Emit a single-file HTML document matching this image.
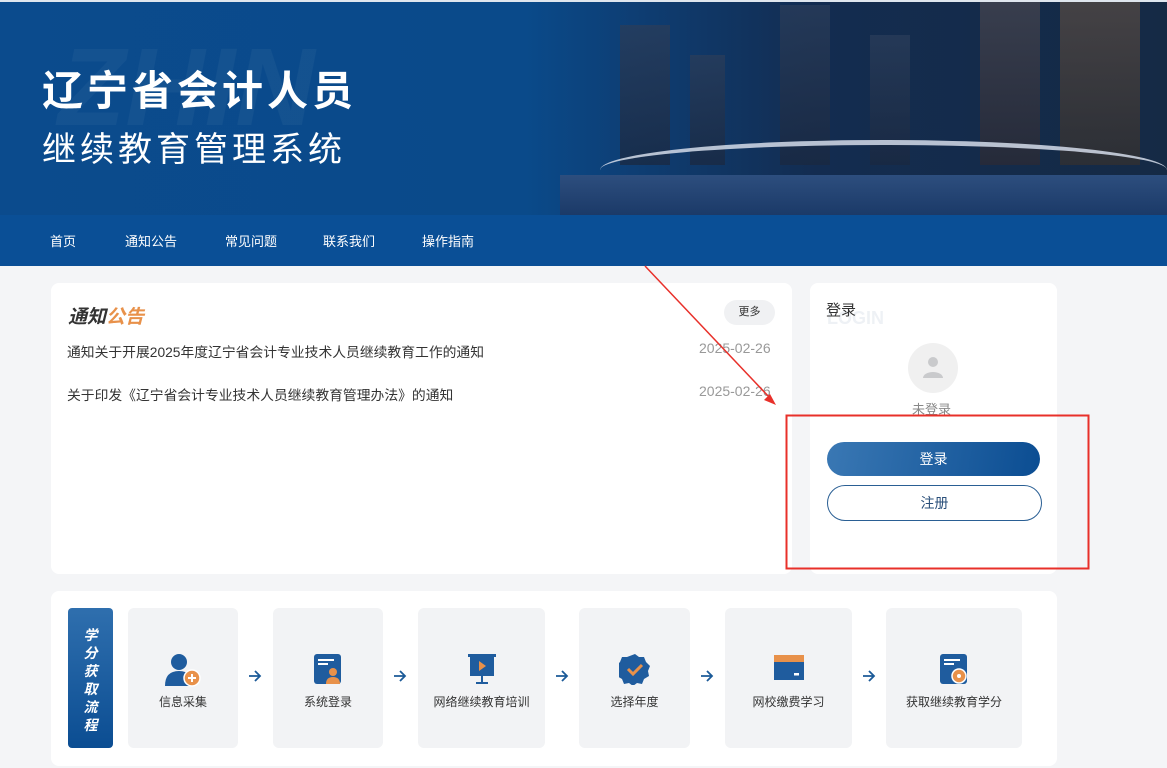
<!DOCTYPE html>
<html><head><meta charset="utf-8"><style>
*{margin:0;padding:0;box-sizing:border-box}
body{width:1167px;height:768px;overflow:hidden;background:#f4f5f7;font-family:"Liberation Sans","Noto Sans CJK SC",sans-serif;position:relative}
.banner{position:absolute;left:0;top:2px;width:1167px;height:213px;background:linear-gradient(90deg,#0b4b8d 0%,#0a4a8a 45%,#0e3d72 55%,#132c50 70%,#152a45 100%);overflow:hidden}
.city{position:absolute;left:560px;top:0;width:607px;height:213px}
.bld{position:absolute;bottom:50px;background:linear-gradient(180deg,#2a3d5a,#1a2840);opacity:.75}
.bridge{position:absolute;left:600px;top:138px;width:567px;height:40px;border-top:5px solid #d4dcea;border-radius:50% 50% 0 0/30px 30px 0 0;opacity:.85}
.water{position:absolute;left:560px;bottom:0;width:607px;height:40px;background:linear-gradient(180deg,#2d4e7e,#1b3a68)}
.t1{position:absolute;left:42px;top:64px;color:#fff;font-size:41px;font-weight:bold;letter-spacing:4px;line-height:50px}
.t2{position:absolute;left:42px;top:124px;color:#fff;font-size:34px;letter-spacing:4px;line-height:48px}
.wm{position:absolute;left:58px;top:22px;font-size:110px;font-weight:bold;font-style:italic;color:rgba(255,255,255,.04)}
.nav{position:absolute;left:0;top:215px;width:1167px;height:51px;background:#0a4f96;color:#fff;font-size:13px}
.nav span{position:absolute;top:16px}
.card{position:absolute;background:#fff;border-radius:8px}
.more{position:absolute;left:724px;top:300px;width:51px;height:25px;border-radius:13px;background:#f0f1f3;font-size:11px;color:#333;text-align:center;line-height:25px}
.news{position:absolute;left:67px;font-size:13.8px;color:#333}
.date{position:absolute;left:699px;font-size:14px;color:#999}
.box{position:absolute;top:608px;height:140px;background:#f2f3f5;border-radius:6px;text-align:center;font-size:12px;color:#333}
.box .lb{position:absolute;left:0;right:0;top:85px}
.box svg{position:absolute;left:50%;top:45px;transform:translateX(-50%)}
.arr{position:absolute;top:669px}
</style></head><body>
<div class="banner">
<div class="wm">ZHIN</div>
<div class="city">
<div class="bld" style="left:60px;width:50px;height:140px"></div>
<div class="bld" style="left:130px;width:35px;height:110px"></div>
<div class="bld" style="left:220px;width:50px;height:160px"></div>
<div class="bld" style="left:310px;width:40px;height:130px"></div>
<div class="bld" style="left:420px;width:60px;height:200px;background:linear-gradient(180deg,#4a4a55,#2b2a34)"></div>
<div class="bld" style="left:500px;width:80px;height:190px;background:linear-gradient(180deg,#5a4e48,#33302f)"></div>
</div>
<div class="water"></div>
<div class="bridge"></div>
<div class="t1">辽宁省会计人员</div>
<div class="t2">继续教育管理系统</div>
</div>
<div style="position:absolute;left:0;top:0;width:1167px;height:2px;background:#dfe6ee"></div>
<div class="nav"><span style="left:50px">首页</span><span style="left:125px">通知公告</span><span style="left:225px">常见问题</span><span style="left:323px">联系我们</span><span style="left:422px">操作指南</span></div>

<div class="card" style="left:51px;top:283px;width:741px;height:291px"></div>
<div style="position:absolute;left:68px;top:302px;font-size:19px;font-weight:bold;font-style:italic"><span style="color:#333">通知</span><span style="color:#e8914a">公告</span></div>
<div class="more">更多</div>
<div class="news" style="top:341px">通知关于开展2025年度辽宁省会计专业技术人员继续教育工作的通知</div>
<div class="date" style="top:340px">2025-02-26</div>
<div class="news" style="top:384px">关于印发《辽宁省会计专业技术人员继续教育管理办法》的通知</div>
<div class="date" style="top:383px">2025-02-26</div>

<div class="card" style="left:810px;top:283px;width:247px;height:291px"></div>
<div style="position:absolute;left:827px;top:308px;font-size:18px;font-weight:bold;color:#eef1f5">LOGIN</div>
<div style="position:absolute;left:826px;top:299px;font-size:15px;color:#333">登录</div>
<div style="position:absolute;left:908px;top:343px;width:50px;height:50px;border-radius:50%;background:#f0f0f0"></div>
<svg style="position:absolute;left:921px;top:355px" width="24" height="24" viewBox="0 0 24 24"><circle cx="12" cy="7" r="5" fill="#c9cacc"/><path d="M2 23a10 6 0 0 1 20 0z" fill="#c9cacc"/></svg>
<div style="position:absolute;left:912px;top:399px;font-size:13px;color:#888">未登录</div>
<div style="position:absolute;left:827px;top:442px;width:213px;height:34px;border-radius:17px;background:linear-gradient(100deg,#3a78b4,#0b4d92);color:#fff;text-align:center;line-height:34px;font-size:14px">登录</div>
<div style="position:absolute;left:827px;top:485px;width:215px;height:36px;border-radius:18px;border:1px solid #2a5f94;color:#2a4f7a;text-align:center;line-height:34px;font-size:14px">注册</div>

<div class="card" style="left:51px;top:591px;width:1006px;height:175px"></div>
<div style="position:absolute;left:68px;top:608px;width:45px;height:140px;border-radius:4px;background:linear-gradient(180deg,#2f6fae,#0b4d92);color:#fff;font-weight:bold;font-style:italic;font-size:14px;text-align:center;line-height:18px;padding-top:18px">学<br>分<br>获<br>取<br>流<br>程</div>

<div class="box" style="left:128px;width:110px"><svg width="36" height="34" viewBox="0 0 36 34"><circle cx="14" cy="9" r="8" fill="#1f5c9e"/><path d="M0 33q0-15 14-15q14 0 14 15z" fill="#1f5c9e"/><circle cx="27" cy="25" r="8" fill="#e8914a" stroke="#fff" stroke-width="1.5"/><path d="M23 25h8M27 21v8" stroke="#fff" stroke-width="2"/></svg><div class="lb">信息采集</div></div>
<svg class="arr" style="left:248px" width="14" height="14" viewBox="0 0 14 14"><path d="M1 7h11M7 2l5 5-5 5" stroke="#1b5a98" stroke-width="1.8" fill="none"/></svg>
<div class="box" style="left:273px;width:110px"><svg width="30" height="32" viewBox="0 0 30 32"><rect x="1" y="1" width="27" height="30" rx="3" fill="#1f5c9e"/><path d="M5 7h16M5 11h10" stroke="#fff" stroke-width="2"/><circle cx="20" cy="19" r="4" fill="#e8914a"/><path d="M13 31q0-7 7-7q7 0 7 7z" fill="#e8914a"/></svg><div class="lb">系统登录</div></div>
<svg class="arr" style="left:393px" width="14" height="14" viewBox="0 0 14 14"><path d="M1 7h11M7 2l5 5-5 5" stroke="#1b5a98" stroke-width="1.8" fill="none"/></svg>
<div class="box" style="left:418px;width:127px"><svg width="30" height="32" viewBox="0 0 30 32"><rect x="1" y="1" width="28" height="3" fill="#1f5c9e"/><rect x="3" y="3" width="24" height="20" fill="#1f5c9e"/><path d="M12 8l7 5-7 5z" fill="#e8914a"/><path d="M15 23v6M9 30h12" stroke="#1f5c9e" stroke-width="2"/></svg><div class="lb">网络继续教育培训</div></div>
<svg class="arr" style="left:555px" width="14" height="14" viewBox="0 0 14 14"><path d="M1 7h11M7 2l5 5-5 5" stroke="#1b5a98" stroke-width="1.8" fill="none"/></svg>
<div class="box" style="left:579px;width:111px"><svg width="32" height="32" viewBox="0 0 32 32"><path d="M16 1l4 3 5 0 2 5 4 4-2 5 1 5-5 3-2 5-5-1-4 3-4-3-5 1-2-5-5-3 1-5-2-5 4-4 2-5 5 0z" fill="#1f5c9e"/><path d="M9 16l5 5 9-9" stroke="#e8914a" stroke-width="3" fill="none"/></svg><div class="lb">选择年度</div></div>
<svg class="arr" style="left:700px" width="14" height="14" viewBox="0 0 14 14"><path d="M1 7h11M7 2l5 5-5 5" stroke="#1b5a98" stroke-width="1.8" fill="none"/></svg>
<div class="box" style="left:725px;width:127px"><svg width="30" height="28" viewBox="0 0 30 28"><rect x="0" y="2" width="30" height="7" fill="#e8914a"/><rect x="0" y="9" width="30" height="18" fill="#1f5c9e"/><rect x="20" y="20" width="5" height="2.5" fill="#fff"/></svg><div class="lb">网校缴费学习</div></div>
<svg class="arr" style="left:862px" width="14" height="14" viewBox="0 0 14 14"><path d="M1 7h11M7 2l5 5-5 5" stroke="#1b5a98" stroke-width="1.8" fill="none"/></svg>
<div class="box" style="left:886px;width:136px"><svg width="30" height="32" viewBox="0 0 30 32"><rect x="1" y="1" width="27" height="30" rx="3" fill="#1f5c9e"/><path d="M5 7h16M5 11h10" stroke="#fff" stroke-width="2"/><circle cx="20" cy="23" r="7" fill="#e8914a" stroke="#fff" stroke-width="1.5"/><circle cx="20" cy="23" r="2" fill="#fff"/></svg><div class="lb">获取继续教育学分</div></div>

<svg style="position:absolute;left:0;top:0" width="1167" height="768"><line x1="645" y1="266" x2="770" y2="398" stroke="#e8302a" stroke-width="1.5"/><path d="M776 405l-12-5 6-6z" fill="#e8302a"/><rect x="786.5" y="415.5" width="302" height="153" fill="none" stroke="#e8302a" stroke-width="2"/></svg>
</body></html>
